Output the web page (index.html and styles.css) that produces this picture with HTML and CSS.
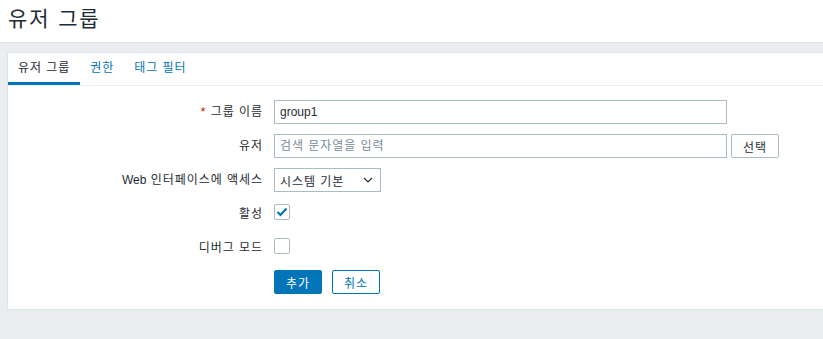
FILE: index.html
```html
<!DOCTYPE html>
<html lang="ko">
<head>
    <meta charset="UTF-8">
    <title>유저 그룹</title>
    <link rel="stylesheet" href="styles.css">
</head>
<body>
    <div class="header">
        <h1 class="page-title">유저 그룹</h1>
    </div>

    <div class="wrapper">
        <div class="panel">
            <ul class="tabs">
                <li class="tab active">유저 그룹</li>
                <li class="tab">권한</li>
                <li class="tab">태그 필터</li>
            </ul>

            <form class="form-grid">
                <label class="form-label"><span class="required">*</span> 그룹 이름</label>
                <div class="form-field">
                    <input type="text" class="text-input wide latin" value="group1">
                </div>

                <label class="form-label">유저</label>
                <div class="form-field">
                    <input type="text" class="text-input wide" placeholder="검색 문자열을 입력">
                    <button type="button" class="btn-grey">선택</button>
                </div>

                <label class="form-label"><span class="latin">Web</span> 인터페이스에 액세스</label>
                <div class="form-field">
                    <div class="select-box">
                        <span>시스템 기본</span>
                        <svg class="caret" width="10" height="6" viewBox="0 0 10 6"><polyline points="1,1 5,5 9,1" fill="none" stroke="#1f2c33" stroke-width="1.2"/></svg>
                    </div>
                </div>

                <label class="form-label">활성</label>
                <div class="form-field">
                    <span class="checkbox">
                        <svg width="12" height="10" viewBox="0 0 12 10"><polyline points="1.5,5 4.5,8 10.5,1.5" fill="none" stroke="#0275b8" stroke-width="2.2"/></svg>
                    </span>
                </div>

                <label class="form-label">디버그 모드</label>
                <div class="form-field">
                    <span class="checkbox"></span>
                </div>

                <div></div>
                <div class="form-field buttons">
                    <button type="submit" class="btn-primary">추가</button>
                    <button type="button" class="btn-alt">취소</button>
                </div>
            </form>
        </div>
    </div>
</body>
</html>
```

FILE: styles.css
```css
* {
    margin: 0;
    padding: 0;
    box-sizing: border-box;
    font-family: "Liberation Sans", Arial, "Noto Sans CJK KR", sans-serif;
}
body {
    background: #ebeef0;
    color: #1f2c33;
    font-size: 12px;
    letter-spacing: 0.08em;
}
.latin {
    letter-spacing: 0;
}
.header {
    background: #fff;
    height: 43px;
    border-bottom: 1px solid #dfe4e7;
    padding: 6px 8px 0;
}
.page-title {
    font-size: 21px;
    font-weight: normal;
    color: #1f2c33;
    line-height: 26px;
    letter-spacing: 0.09em;
}
.wrapper {
    padding: 9px 0 0 7px;
}
.panel {
    background: #fff;
    border: 1px solid #dfe4e7;
    border-right: none;
    height: 258px;
}
.tabs {
    list-style: none;
    display: flex;
    border-bottom: 1px solid #ebeef0;
    height: 33px;
}
.tab {
    padding: 0 10px;
    line-height: 31px;
    color: #0275b8;
    border-bottom: 3px solid transparent;
}
.tab.active {
    color: #1f2c33;
    border-bottom-color: #0275b8;
}
.form-grid {
    display: grid;
    grid-template-columns: 256px 1fr;
    column-gap: 10px;
    row-gap: 10px;
    padding-top: 14px;
}
.form-label {
    text-align: right;
    line-height: 24px;
    height: 24px;
    padding-right: 1px;
}
.required {
    color: #d40000;
}
.form-field {
    display: flex;
    align-items: flex-start;
    min-height: 24px;
}
.text-input {
    height: 24px;
    border: 1px solid #acbbc2;
    padding: 0 5px;
    font-size: 12px;
    color: #1f2c33;
    outline: none;
    letter-spacing: 0.08em;
}
.text-input.latin {
    letter-spacing: 0;
}
.text-input::placeholder {
    color: #768d99;
}
.wide {
    width: 453px;
}
.btn-grey {
    margin-left: 4px;
    height: 24px;
    width: 48px;
    background: #fff;
    border: 1px solid #acbbc2;
    border-radius: 2px;
    color: #1f2c33;
    font-size: 12px;
    letter-spacing: 0.08em;
}
.select-box {
    width: 107px;
    height: 24px;
    border: 1px solid #acbbc2;
    display: flex;
    align-items: center;
    justify-content: space-between;
    padding: 0 7px 0 5px;
}
.checkbox {
    width: 16px;
    height: 16px;
    margin-top: 2px;
    border: 1px solid #acbbc2;
    border-radius: 2px;
    display: flex;
    align-items: center;
    justify-content: center;
}
.buttons {
    gap: 10px;
}
.btn-primary,
.btn-alt {
    height: 24px;
    width: 48px;
    border-radius: 2px;
    font-size: 12px;
    letter-spacing: 0.08em;
    border: 1px solid #0275b8;
}
.btn-primary {
    background: #0275b8;
    color: #fff;
}
.btn-alt {
    background: #fff;
    color: #0275b8;
}
```
